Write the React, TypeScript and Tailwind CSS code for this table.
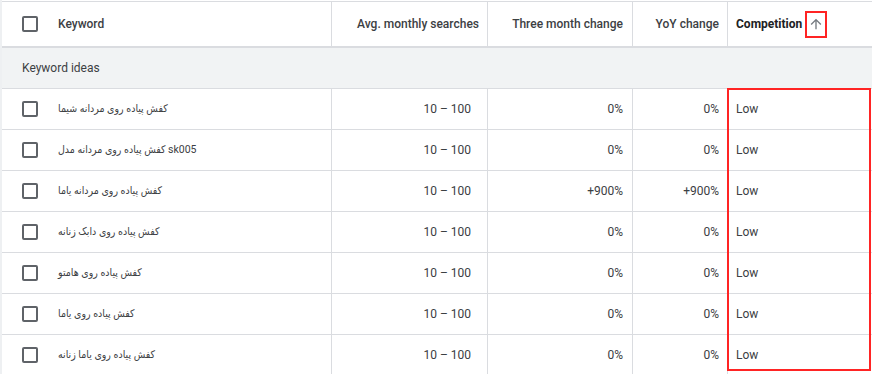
import React from 'react';

type Row = {
  keyword: string;
  searches: string;
  threeMonth: string;
  yoy: string;
  competition: string;
};

const rows: Row[] = [
  { keyword: 'کفش پیاده روی مردانه شیما', searches: '10 – 100', threeMonth: '0%', yoy: '0%', competition: 'Low' },
  { keyword: 'کفش پیاده روی مردانه مدل sk005', searches: '10 – 100', threeMonth: '0%', yoy: '0%', competition: 'Low' },
  { keyword: 'کفش پیاده روی مردانه یاما', searches: '10 – 100', threeMonth: '+900%', yoy: '+900%', competition: 'Low' },
  { keyword: 'کفش پیاده روی دابک زنانه', searches: '10 – 100', threeMonth: '0%', yoy: '0%', competition: 'Low' },
  { keyword: 'کفش پیاده روی هامتو', searches: '10 – 100', threeMonth: '0%', yoy: '0%', competition: 'Low' },
  { keyword: 'کفش پیاده روی یاما', searches: '10 – 100', threeMonth: '0%', yoy: '0%', competition: 'Low' },
  { keyword: 'کفش پیاده روی یاما زنانه', searches: '10 – 100', threeMonth: '0%', yoy: '0%', competition: 'Low' },
];

const Checkbox: React.FC = () => (
  <span className="block w-4 h-4 shrink-0 border-2 border-[#5f6368] rounded-[2px]" />
);

const ArrowUp: React.FC = () => (
  <svg viewBox="0 0 24 24" className="w-4 h-4" fill="#757a80">
    <path d="M4 12l1.41 1.41L11 7.83V20h2V7.83l5.58 5.59L20 12l-8-8-8 8z" />
  </svg>
);

const App: React.FC = () => {
  return (
    <div
      className="relative w-[872px] h-[374px] overflow-hidden bg-white pt-px border-l-2 border-[#eef0f2] text-[12px] text-[#3c4043]"
      style={{ fontFamily: "Roboto, 'DejaVu Sans', sans-serif" }}
    >
      {/* header */}
      <div className="flex h-[47px] border-t border-b-2 border-[#dadce0] font-medium">
        <div className="w-[330px] flex items-center gap-5 pl-5 border-r border-[#dadce0]">
          <Checkbox />
          <span>Keyword</span>
        </div>
        <div className="w-[156px] flex items-center justify-end pr-2 border-r border-[#dadce0]">
          Avg. monthly searches
        </div>
        <div className="w-[145px] flex items-center justify-end pr-[9px] border-r border-[#dadce0]">
          Three month change
        </div>
        <div className="w-[95px] flex items-center justify-end pr-2 border-r border-[#dadce0]">
          YoY change
        </div>
        <div className="flex-1 flex items-center pl-2 font-bold text-[#202124]">
          Competition
          <span className="ml-[3px] w-[22px] h-[27px] flex items-center justify-center border-2 border-[#ff2424]">
            <ArrowUp />
          </span>
        </div>
      </div>

      {/* group band */}
      <div className="h-[41px] flex items-center pl-5 bg-[#f1f3f4] border-b border-[#dadce0]">
        Keyword ideas
      </div>

      {/* rows */}
      {rows.map((r, i) => (
        <div key={i} className="flex h-[41px] border-b border-[#dadce0]">
          <div className="w-[330px] flex items-center gap-5 pl-5 border-r border-[#dadce0]">
            <Checkbox />
            <span
              className="text-[10.5px] text-[#3c4043]"
              style={{ fontFamily: "Roboto, 'DejaVu Sans Condensed', 'DejaVu Sans', sans-serif" }}
            >
              {r.keyword}
            </span>
          </div>
          <div className="w-[156px] flex items-center justify-end pr-4 border-r border-[#dadce0]">
            {r.searches}
          </div>
          <div className="w-[145px] flex items-center justify-end pr-[9px] border-r border-[#dadce0]">
            {r.threeMonth}
          </div>
          <div className="w-[95px] flex items-center justify-end pr-2 border-r border-[#dadce0]">
            {r.yoy}
          </div>
          <div className="flex-1 flex items-center pl-2">{r.competition}</div>
        </div>
      ))}

      {/* annotation box */}
      <div className="absolute left-[725px] top-[88px] w-[144px] h-[283px] border-2 border-[#ff2424] pointer-events-none" />
    </div>
  );
};

export default App;
